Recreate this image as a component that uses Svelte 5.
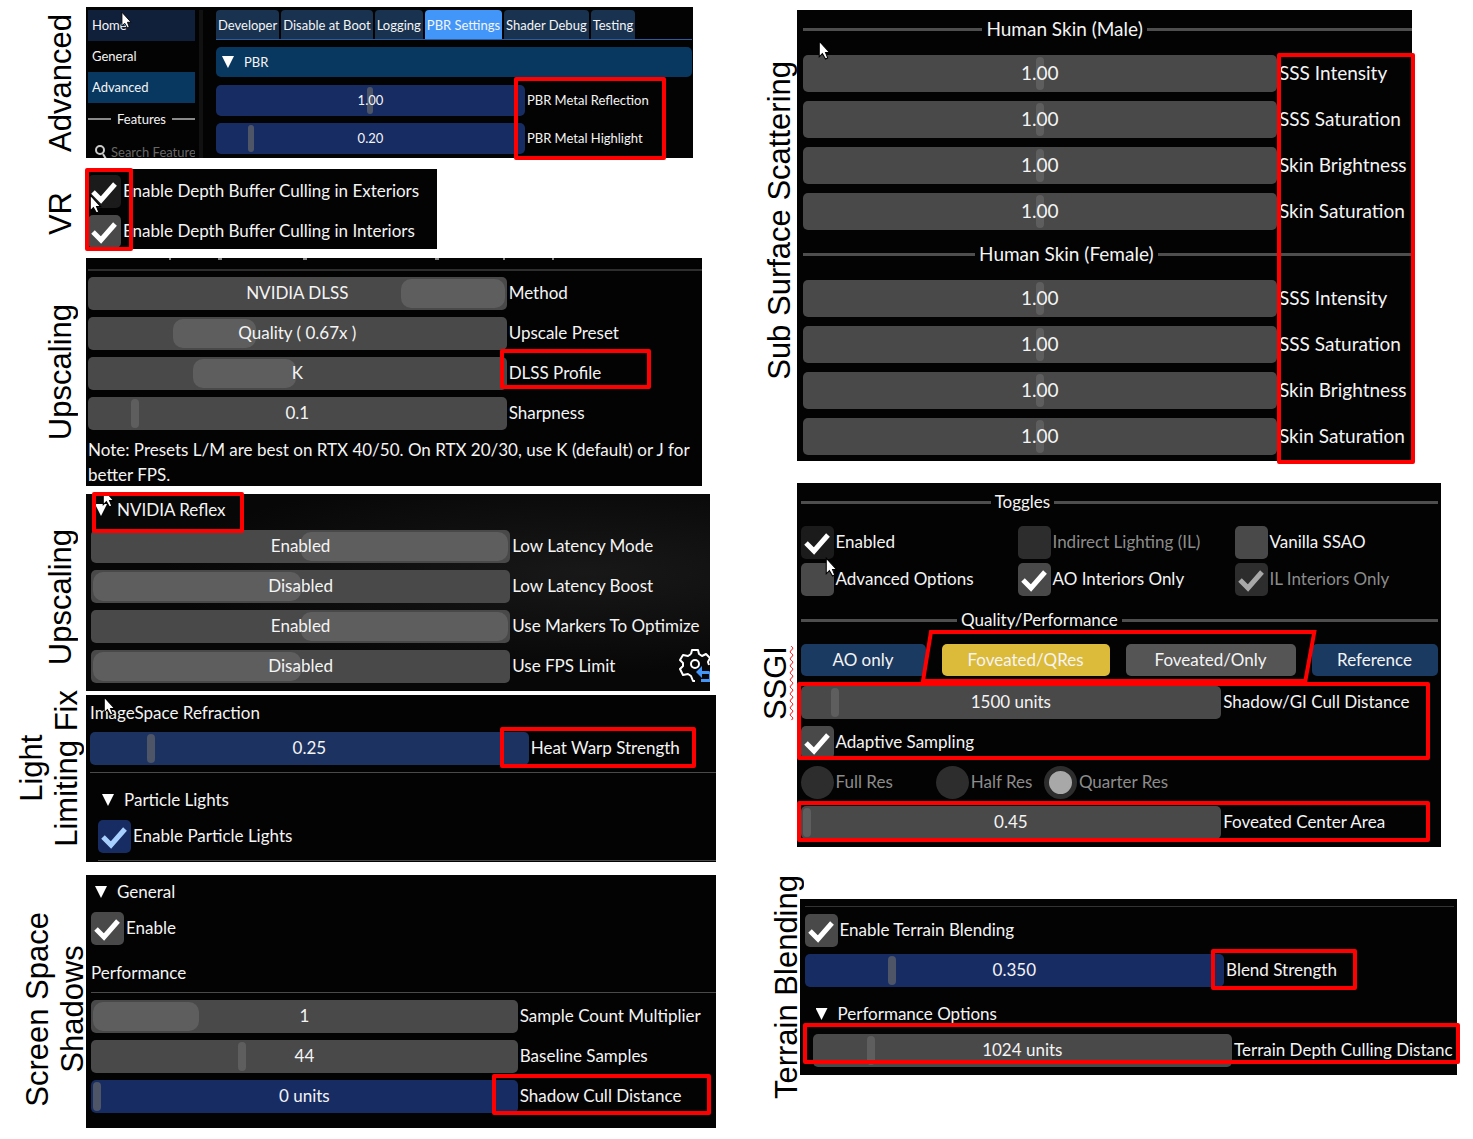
<script lang="ts">
  interface Slider {
    id: string;
    label: string;
    text: string;
    // grab position in percent of the free travel
    value: number;
    grab?: string;
    blue?: boolean;
  }

  const tabs = ["Developer", "Disable at Boot", "Logging", "PBR Settings", "Shader Debug", "Testing"];

  const pbrSliders: Slider[] = [
    { id: "pbr-reflection", label: "PBR Metal Reflection", text: "1.00", value: 50, grab: "6px", blue: true },
    { id: "pbr-highlight", label: "PBR Metal Highlight", text: "0.20", value: 10, grab: "6px", blue: true },
  ];

  const upscalingSliders: Slider[] = [
    { id: "method", label: "Method", text: "NVIDIA DLSS", value: 100, grab: "25%" },
    { id: "preset", label: "Upscale Preset", text: "Quality ( 0.67x )", value: 25, grab: "20%" },
    { id: "profile", label: "DLSS Profile", text: "K", value: 33, grab: "25%" },
    { id: "sharpness", label: "Sharpness", text: "0.1", value: 10 },
  ];

  const reflexSliders: Slider[] = [
    { id: "latency-mode", label: "Low Latency Mode", text: "Enabled", value: 100, grab: "50%" },
    { id: "latency-boost", label: "Low Latency Boost", text: "Disabled", value: 0, grab: "50%" },
    { id: "markers", label: "Use Markers To Optimize", text: "Enabled", value: 100, grab: "50%" },
    { id: "fps-limit", label: "Use FPS Limit", text: "Disabled", value: 0, grab: "50%" },
  ];

  const shadowSliders: Slider[] = [
    { id: "sample-count", label: "Sample Count Multiplier", text: "1", value: 0, grab: "25%" },
    { id: "baseline", label: "Baseline Samples", text: "44", value: 35 },
    { id: "shadow-cull", label: "Shadow Cull Distance", text: "0 units", value: 0, blue: true },
  ];

  const skinLabels = ["SSS Intensity", "SSS Saturation", "Skin Brightness", "Skin Saturation"];
  const skinGroups = ["Male", "Female"].map((name) => ({
    name,
    sliders: skinLabels.map((label, i) => ({ id: `skin-${name}-${i}`, label, text: "1.00", value: 50 })),
  }));
</script>

{#snippet slider(s: Slider)}
  <div class="slider">
    <div class="slider__track" class:slider__track--blue={s.blue}>
      <input
        id={s.id}
        type="range"
        min="0"
        max="100"
        step="any"
        value={s.value}
        style="--grab: {s.grab ?? '8px'}"
      />
      <output for={s.id}>{s.text}</output>
    </div>
    <label for={s.id}>{s.label}</label>
  </div>
{/snippet}

{#snippet check(label: string, checked: boolean, tone = "", disabled = false)}
  <label class="check {tone}" class:check--disabled={disabled}>
    <span class="check__box">
      <input type="checkbox" {checked} {disabled} />
      {#if checked}
        <svg viewBox="0 0 33 33" aria-hidden="true"><path d="M5 17 L13 25 L27 9" /></svg>
      {/if}
    </span>
    <span class="check__text">{label}</span>
  </label>
{/snippet}

{#snippet radio(label: string, checked: boolean)}
  <label class="radio">
    <input type="radio" name="resolution" {checked} disabled />
    <span class="check__text">{label}</span>
  </label>
{/snippet}

{#snippet header(label: string)}
  <button class="header" type="button"><span class="header__arrow"></span>{label}</button>
{/snippet}

{#snippet divider(label: string)}
  <div class="divider"><span>{label}</span></div>
{/snippet}

{#snippet cursor()}
  <svg class="cursor" viewBox="0 0 12 19" aria-hidden="true">
    <path d="M1 1 V16 L4 13 L7 18 L9 17 L7 12 H11 Z" />
  </svg>
{/snippet}

<main class="page">
  <div class="column">
    <section class="section advanced">
      <h2>Advanced</h2>
      <div class="panel">
        <div class="screen">
          <nav class="sidebar">
            <a class="sidebar__item sidebar__item--hover" href="#home">Home</a>
            <a class="sidebar__item" href="#general">General</a>
            <a class="sidebar__item sidebar__item--active" href="#advanced">Advanced</a>
            <div class="sidebar__title"><span>Features</span></div>
            <div class="sidebar__search">
              <svg viewBox="0 0 14 16" aria-hidden="true"><circle cx="6" cy="6" r="4" /><path d="M9 10 L12 15" /></svg>
              <input type="text" placeholder="Search Features" aria-label="Search Features" />
            </div>
          </nav>
          <div class="scrollbar"></div>
          <div class="settings">
            <div class="tabs" role="tablist">
              {#each tabs as tab}
                <button type="button" role="tab" class="tab" class:tab--active={tab === "PBR Settings"} aria-selected={tab === "PBR Settings"}>
                  {tab}
                </button>
              {/each}
            </div>
            {@render header("PBR")}
            {#each pbrSliders as s}{@render slider(s)}{/each}
          </div>
          {@render cursor()}
        </div>
        <div class="mark mark--pbr"></div>
      </div>
    </section>

    <section class="section vr">
      <h2>VR</h2>
      <div class="panel">
        <div class="screen">
          {@render check("Enable Depth Buffer Culling in Exteriors", true, "check--dark")}
          {@render check("Enable Depth Buffer Culling in Interiors", true)}
          {@render cursor()}
        </div>
        <div class="mark mark--vr"></div>
      </div>
    </section>

    <section class="section upscaling">
      <h2>Upscaling</h2>
      <div class="panel">
        <div class="screen">
          <svg class="cut" viewBox="0 0 616 3" aria-hidden="true">
            <path d="M82 0V2M130 1H134M215 1H219M347 1H351M416 0V2M465 0V2" />
          </svg>
          <hr />
          {#each upscalingSliders as s}{@render slider(s)}{/each}
          <p class="note">Note: Presets L/M are best on RTX 40/50. On RTX 20/30, use K (default) or J for better FPS.</p>
        </div>
        <div class="mark mark--profile"></div>
      </div>
    </section>

    <section class="section reflex">
      <h2>Upscaling</h2>
      <div class="panel">
        <div class="screen">
          {@render header("NVIDIA Reflex")}
          {#each reflexSliders as s}{@render slider(s)}{/each}
          <svg class="gear" viewBox="0 0 36 36" aria-hidden="true">
            <path
              class="gear__body"
              d="M12 6 L13 2 H19 L20 6 L23 8 L27 6 L31 10 L29 14 L30 17 M12 6 L9 8 L4 7 L1 12 L4 15 V18 L1 21 L4 27 L9 26 L12 28 L14 33 H16"
            />
            <circle class="gear__body" cx="16" cy="16" r="4" />
            <path class="gear__arrow" d="M17 24 L23 18 V23 H30 L34 26 V34 H22 V31 H30 V26 H23 V30 Z" />
          </svg>
          {@render cursor()}
        </div>
        <div class="mark mark--reflex"></div>
      </div>
    </section>

    <section class="section light">
      <h2>Light<br />Limiting Fix</h2>
      <div class="panel">
        <div class="screen">
          <p class="caption">ImageSpace Refraction</p>
          {@render slider({ id: "heat-warp", label: "Heat Warp Strength", text: "0.25", value: 13, blue: true })}
          <hr />
          <div class="indent">
            {@render header("Particle Lights")}
            {@render check("Enable Particle Lights", true, "check--blue")}
            <hr />
          </div>
          {@render cursor()}
        </div>
        <div class="mark mark--heat"></div>
      </div>
    </section>

    <section class="section shadows">
      <h2>Screen Space<br />Shadows</h2>
      <div class="panel">
        <div class="screen">
          {@render header("General")}
          {@render check("Enable", true)}
          <p class="caption">Performance</p>
          <hr />
          {#each shadowSliders as s}{@render slider(s)}{/each}
        </div>
        <div class="mark mark--cull"></div>
      </div>
    </section>
  </div>

  <div class="column column--right">
    <section class="section skin">
      <h2>Sub Surface Scattering</h2>
      <div class="panel">
        <div class="screen">
          {#each skinGroups as group}
            {@render divider(`Human Skin (${group.name})`)}
            {#each group.sliders as s}{@render slider(s)}{/each}
          {/each}
          {@render cursor()}
        </div>
        <div class="mark mark--skin"></div>
      </div>
    </section>

    <section class="section ssgi">
      <h2><span class="misspelt">SSGI</span></h2>
      <div class="panel">
        <div class="screen">
          {@render divider("Toggles")}
          <div class="toggles">
            {@render check("Enabled", true, "check--dark")}
            {@render check("Indirect Lighting (IL)", false, "", true)}
            {@render check("Vanilla SSAO", false)}
            {@render check("Advanced Options", false)}
            {@render check("AO Interiors Only", true)}
            {@render check("IL Interiors Only", true, "", true)}
          </div>
          {@render divider("Quality/Performance")}
          <div class="presets">
            <button type="button">AO only</button>
            <button type="button" class="presets__current">Foveated/QRes</button>
            <button type="button" class="presets__gray">Foveated/Only</button>
            <button type="button">Reference</button>
          </div>
          {@render slider({ id: "gi-cull", label: "Shadow/GI Cull Distance", text: "1500 units", value: 7 })}
          {@render check("Adaptive Sampling", true)}
          <div class="radios">
            {@render radio("Full Res", false)}
            {@render radio("Half Res", false)}
            {@render radio("Quarter Res", true)}
          </div>
          {@render slider({ id: "foveated-area", label: "Foveated Center Area", text: "0.45", value: 0 })}
          {@render cursor()}
        </div>
        <svg class="mark-shape" viewBox="0 0 400 56" preserveAspectRatio="none" aria-hidden="true">
          <path d="M12 4 H396 L387 53 H4 Z" />
        </svg>
        <div class="mark mark--sampling"></div>
        <div class="mark mark--foveated"></div>
      </div>
    </section>

    <section class="section terrain">
      <h2>Terrain Blending</h2>
      <div class="panel">
        <div class="screen">
          <hr />
          {@render check("Enable Terrain Blending", true)}
          {@render slider({ id: "blend", label: "Blend Strength", text: "0.350", value: 20, blue: true })}
          <div class="indent">
            {@render header("Performance Options")}
            {@render slider({ id: "terrain-cull", label: "Terrain Depth Culling Distanc", text: "1024 units", value: 13 })}
          </div>
        </div>
        <div class="mark mark--blend"></div>
        <div class="mark mark--terrain"></div>
      </div>
    </section>
  </div>
</main>

<style>
  :global(body) {
    margin: 0;
    background: #fff;
  }

  .page {
    display: grid;
    grid-template-columns: minmax(0, 1fr) minmax(0, 1fr);
    align-items: start;
    overflow: hidden;
    padding-bottom: 11px;
    font-family: Lato, "Noto Sans", sans-serif;
    font-size: 17px;
    line-height: 24px;
    color: #f4f4f4;
  }

  .column {
    display: flex;
    flex-direction: column;
  }

  .section {
    display: grid;
    grid-template-columns: 86px minmax(0, 1fr);
    align-items: center;
  }

  .column--right .section {
    grid-template-columns: 60px minmax(0, 1fr);
  }

  /* the half turn swaps the sides, so left padding opens a gap to the panel */
  h2 {
    justify-self: end;
    margin: 0;
    padding-left: 8px;
    writing-mode: vertical-rl;
    transform: rotate(180deg);
    font: 400 31px/35px "Liberation Sans", Arial, sans-serif;
    text-align: center;
    white-space: nowrap;
    color: #000;
  }

  .misspelt {
    text-decoration: underline wavy #f00 1px;
    text-decoration-skip-ink: none;
    text-underline-position: left;
    text-underline-offset: -3px;
  }

  .panel {
    position: relative;
  }

  .screen {
    position: relative;
    box-sizing: border-box;
    overflow: hidden;
    background: #030303;
  }

  button,
  input {
    font: inherit;
    color: inherit;
  }

  hr {
    margin: 0;
    border: 0;
    border-top: 1px solid #4a4a4a;
  }

  p {
    margin: 0;
  }

  /* sliders */
  .slider {
    display: grid;
    grid-template-columns: minmax(0, 420fr) minmax(0, 194fr);
    gap: 2px;
    align-items: center;
    margin-bottom: 7px;
    white-space: nowrap;
  }

  .slider label,
  .check__text {
    padding-bottom: 1px;
  }

  .slider__track {
    display: grid;
    align-items: center;
    height: 33px;
    box-sizing: border-box;
    padding: 2px;
    border-radius: 5px;
    background: #494949;
    --grab-color: #5e5e5e;
  }

  .slider__track--blue {
    background: #182c64;
    --grab-color: #4d5566;
  }

  .slider__track input,
  .slider__track output {
    grid-area: 1 / 1;
  }

  .slider__track output {
    padding-bottom: 1px;
    text-align: center;
    pointer-events: none;
  }

  .slider__track input {
    appearance: none;
    width: 100%;
    height: 29px;
    margin: 0;
    background: none;
  }

  .slider__track input::-webkit-slider-thumb {
    appearance: none;
    width: var(--grab);
    height: 29px;
    border-radius: 10px;
    background: var(--grab-color);
  }

  /* check boxes and radio buttons */
  .check,
  .radio {
    display: flex;
    align-items: center;
    gap: 2px;
    white-space: nowrap;
  }

  .check__box {
    display: grid;
    flex: none;
    width: 33px;
    height: 33px;
  }

  .check__box input,
  .check__box svg {
    grid-area: 1 / 1;
  }

  .check__box input {
    appearance: none;
    width: 33px;
    height: 33px;
    margin: 0;
    border-radius: 5px;
    background: #494949;
  }

  .check__box svg {
    fill: none;
    stroke: #fff;
    stroke-width: 5;
    pointer-events: none;
  }

  .check--dark .check__box input {
    background: #1b1b1b;
  }

  .check--blue .check__box input {
    background: #182c64;
  }

  .check--blue .check__box svg {
    stroke: #a8d0ff;
  }

  .check--disabled,
  .radio {
    color: #8c8c8c;
  }

  .check--disabled .check__box input {
    background: #2d2d2d;
  }

  .check--disabled .check__box svg {
    stroke: #a8a8a8;
  }

  .radio input {
    appearance: none;
    flex: none;
    width: 33px;
    height: 33px;
    margin: 0;
    border-radius: 50%;
    background: #2d2d2d;
  }

  .radio input:checked {
    background: #a8a8a8;
    border: 5px solid #2d2d2d;
  }

  /* collapsing headers and titled dividers */
  .header {
    display: flex;
    align-items: center;
    gap: 10px;
    box-sizing: border-box;
    height: 33px;
    padding: 0 4px 1px;
    border: 0;
    background: none;
    text-align: left;
  }

  .header__arrow {
    width: 12px;
    height: 12px;
    background: #fff;
    clip-path: polygon(0 0, 100% 0, 50% 100%);
  }

  .divider {
    display: grid;
    grid-template-columns: minmax(0, 191fr) auto minmax(0, 385fr);
    align-items: center;
    gap: 4px;
    white-space: nowrap;
  }

  .divider::before,
  .divider::after {
    content: "";
    height: 3px;
    background: #4e4e4e;
  }

  .cursor {
    position: absolute;
    width: 13px;
    height: 20px;
    fill: #fff;
    stroke: #000;
    stroke-width: 1;
  }

  /* red annotations */
  .mark {
    position: absolute;
    box-sizing: border-box;
    border: 4px solid #f00;
    border-radius: 2px;
    pointer-events: none;
  }

  .mark-shape {
    position: absolute;
    left: 19%;
    top: 145px;
    width: 62%;
    height: 56px;
    fill: none;
    stroke: #f00;
    stroke-width: 4;
    pointer-events: none;
  }

  /* advanced */
  .advanced {
    margin-top: 7px;
  }

  .advanced .panel {
    width: 93.3%;
  }

  .advanced .screen {
    display: grid;
    grid-template-columns: minmax(0, 107fr) minmax(0, 21fr) minmax(0, 476fr);
    height: 151px;
    padding: 3px 1px 0 2px;
    font-size: 13px;
  }

  .sidebar__item {
    display: block;
    padding: 0 4px;
    line-height: 31px;
    color: inherit;
    text-decoration: none;
  }

  .sidebar__item--hover {
    background: #10203a;
  }

  .sidebar__item--active {
    background: #083860;
  }

  .sidebar__title {
    display: grid;
    grid-template-columns: 1fr auto 1fr;
    align-items: center;
    gap: 6px;
    line-height: 32px;
  }

  .sidebar__title::before,
  .sidebar__title::after {
    content: "";
    height: 2px;
    background: #8a8a8a;
  }

  .sidebar__search {
    display: flex;
    align-items: center;
    gap: 3px;
    height: 34px;
    padding-left: 6px;
  }

  .sidebar__search svg {
    flex: none;
    width: 14px;
    height: 16px;
    fill: none;
    stroke: #ccc;
    stroke-width: 2;
  }

  .sidebar__search input {
    min-width: 0;
    padding: 0;
    border: 0;
    background: none;
  }

  .sidebar__search input::placeholder {
    color: #686868;
  }

  .scrollbar {
    justify-self: start;
    width: 4px;
    margin-left: 4px;
    background: #111;
  }

  .tabs {
    display: flex;
    gap: 2px;
    margin-bottom: 7px;
    border-bottom: 1px solid #2c5c9e;
  }

  .tab {
    height: 29px;
    padding: 0 2px;
    border: 0;
    border-radius: 4px 4px 0 0;
    background: #19324f;
    white-space: nowrap;
  }

  .tab--active {
    background: #4296fa;
  }

  .advanced .header {
    width: 100%;
    height: 30px;
    margin-bottom: 8px;
    padding: 0 6px;
    border-radius: 5px;
    background: #083860;
  }

  .advanced .slider {
    grid-template-columns: minmax(0, 309fr) minmax(0, 165fr);
  }

  .advanced .slider__track {
    height: 31px;
  }

  .advanced .slider__track input,
  .advanced .slider__track input::-webkit-slider-thumb {
    height: 27px;
  }

  .advanced .cursor {
    left: 35px;
    top: 3px;
    width: 11px;
  }

  .mark--pbr {
    left: 70.6%;
    top: 70px;
    width: 25%;
    height: 83px;
  }

  /* vr */
  .vr {
    margin-top: 11px;
  }

  .vr h2 {
    padding-bottom: 10px;
  }

  .vr .panel {
    width: 54%;
  }

  .vr .screen {
    display: flex;
    flex-direction: column;
    gap: 7px;
    padding: 6px 0 1px 2px;
  }

  .vr .cursor {
    left: 3px;
    top: 25px;
  }

  .mark--vr {
    left: -1px;
    top: -1px;
    width: 48px;
    height: 83px;
  }

  /* upscaling */
  .upscaling {
    margin-top: 9px;
  }

  .upscaling .panel {
    width: 94.7%;
  }

  .upscaling .screen {
    padding: 0 0 0 2px;
  }

  .cut {
    display: block;
    height: 3px;
    stroke: #888;
    stroke-width: 2;
  }

  .upscaling hr {
    margin: 8px 0 6px;
    border-top: 2px solid #2e2e2e;
  }

  .note {
    margin-bottom: -1px;
    line-height: 25px;
  }

  .mark--profile {
    left: 67.2%;
    top: 91px;
    width: 24.6%;
    height: 40px;
  }

  /* reflex */
  .reflex {
    margin-top: 8px;
  }

  .reflex .panel {
    width: 95.9%;
  }

  .reflex .screen {
    padding: 0 0 1px 5px;
    background: radial-gradient(ellipse at 80% 40%, #181818, #070707 60%);
  }

  .reflex .slider {
    grid-template-columns: minmax(0, 420fr) minmax(0, 198fr);
  }

  .reflex .header {
    margin-bottom: 3px;
  }

  .gear {
    position: absolute;
    right: -5px;
    bottom: 7px;
    width: 36px;
    height: 36px;
  }

  .gear__body {
    fill: none;
    stroke: #fff;
    stroke-width: 2;
    stroke-linejoin: round;
  }

  .gear__arrow {
    fill: #4296fa;
  }

  .reflex .cursor {
    left: 16px;
    top: -6px;
  }

  .reflex h2 {
    padding-bottom: 10px;
  }

  .mark--reflex {
    left: 1%;
    top: -2px;
    width: 24.4%;
    height: 41px;
  }

  /* light limiting fix */
  .light {
    margin-top: 4px;
  }

  .light h2 {
    align-self: start;
    margin-top: -5px;
    padding-left: 2px;
  }

  .light .panel,
  .shadows .panel {
    width: 96.8%;
  }

  .light .screen {
    padding: 6px 0 1px 4px;
  }

  .light .caption {
    margin-bottom: 7px;
  }

  .light .slider {
    grid-template-columns: minmax(0, 439fr) minmax(0, 185fr);
  }

  .light .slider__track {
    background: #1c3260;
  }

  .light .indent {
    padding: 11px 0 0 8px;
  }

  .light .header {
    margin-bottom: 3px;
  }

  .light .check {
    margin-bottom: 7px;
  }

  .light .cursor {
    left: 17px;
    top: 1px;
  }

  .mark--heat {
    left: 65.7%;
    top: 32px;
    width: 31.1%;
    height: 41px;
  }

  /* screen space shadows */
  .shadows {
    margin-top: 13px;
  }

  .shadows h2 {
    margin-right: -4px;
    padding: 0 0 16px;
  }

  .shadows .screen {
    padding: 1px 0 8px 5px;
  }

  .shadows .header {
    margin-bottom: 3px;
  }

  .shadows .caption {
    margin: 16px 0 7px;
  }

  .shadows .slider {
    grid-template-columns: minmax(0, 427fr) minmax(0, 196fr);
  }

  .shadows hr {
    margin-bottom: 7px;
  }

  .mark--cull {
    left: 64.5%;
    top: 199px;
    width: 34.7%;
    height: 41px;
  }

  /* sub surface scattering */
  .skin {
    margin-top: 10px;
  }

  .skin h2 {
    padding: 30px 0 0;
  }

  .skin .panel {
    width: 91%;
  }

  .skin .screen {
    padding: 7px 0 0 6px;
    font-size: 19px;
  }

  .skin .divider {
    grid-template-columns: minmax(0, 179fr) auto minmax(0, 264fr);
    margin-bottom: 14px;
  }

  .skin .slider {
    grid-template-columns: minmax(0, 474fr) minmax(0, 133fr);
    margin-bottom: 9px;
  }

  .skin .slider + .divider {
    margin-top: 12px;
  }

  .skin .slider:has(+ .cursor) {
    margin-bottom: 6px;
  }

  .skin .slider__track {
    height: 37px;
  }

  .skin .slider__track input,
  .skin .slider__track input::-webkit-slider-thumb {
    height: 33px;
  }

  .skin .cursor {
    left: 21px;
    top: 30px;
  }

  .mark--skin {
    left: 78.1%;
    top: 43px;
    width: 22.3%;
    height: 411px;
  }

  /* ssgi */
  .ssgi {
    margin-top: 22px;
  }

  .ssgi h2 {
    padding: 0 0 36px 4px;
  }

  .ssgi .panel {
    width: 95.2%;
  }

  .ssgi .screen {
    padding: 7px 3px 1px 4px;
  }

  .toggles {
    display: grid;
    grid-template-columns: repeat(3, minmax(0, 1fr));
    row-gap: 4px;
    margin: 12px -14px 12px 0;
  }

  .ssgi .divider + .presets {
    margin-top: 12px;
  }

  .presets {
    display: grid;
    grid-template-columns: minmax(0, 125fr) minmax(0, 168fr) minmax(0, 170fr) minmax(0, 126fr);
    gap: 16px;
    margin-bottom: 10px;
  }

  .presets button {
    height: 32px;
    padding: 0;
    border: 0;
    border-radius: 5px;
    background: #1b3a62;
  }

  .presets .presets__current {
    background: #ddbb3a;
  }

  .presets .presets__gray {
    background: #555;
  }

  .ssgi .slider {
    grid-template-columns: minmax(0, 420fr) minmax(0, 214fr);
  }

  .radios {
    display: grid;
    grid-template-columns: minmax(0, 135fr) minmax(0, 108fr) minmax(0, 393fr);
    margin: 7px 0;
  }

  .ssgi .cursor {
    left: 28px;
    top: 74px;
  }

  .mark--sampling {
    left: 0;
    top: 199px;
    width: 98.4%;
    height: 78px;
  }

  .mark--foveated {
    left: 0;
    top: 318px;
    width: 98.4%;
    height: 41px;
  }

  /* terrain blending */
  .terrain {
    margin-top: 28px;
  }

  .column--right .terrain {
    grid-template-columns: 63px minmax(0, 1fr);
  }

  .terrain h2 {
    margin-right: -4px;
    padding: 0;
  }

  .terrain .panel {
    width: 97.6%;
  }

  .terrain .screen {
    padding: 7px 3px 1px 5px;
  }

  .terrain hr {
    margin-bottom: 7px;
    border-top-color: #333;
  }

  .terrain .check {
    margin-bottom: 7px;
  }

  .terrain .slider {
    grid-template-columns: minmax(0, 420fr) minmax(0, 228fr);
  }

  .terrain .indent {
    padding: 4px 0 0 8px;
  }

  .terrain .indent .slider {
    grid-template-columns: minmax(0, 420fr) minmax(0, 220fr);
  }

  .terrain .header {
    margin-bottom: 3px;
    padding: 0 3px 1px;
  }

  .mark--blend {
    left: 62.6%;
    top: 50px;
    width: 22.2%;
    height: 41px;
  }

  .mark--terrain {
    left: 3px;
    top: 124px;
    width: 100%;
    height: 41px;
  }
</style>
